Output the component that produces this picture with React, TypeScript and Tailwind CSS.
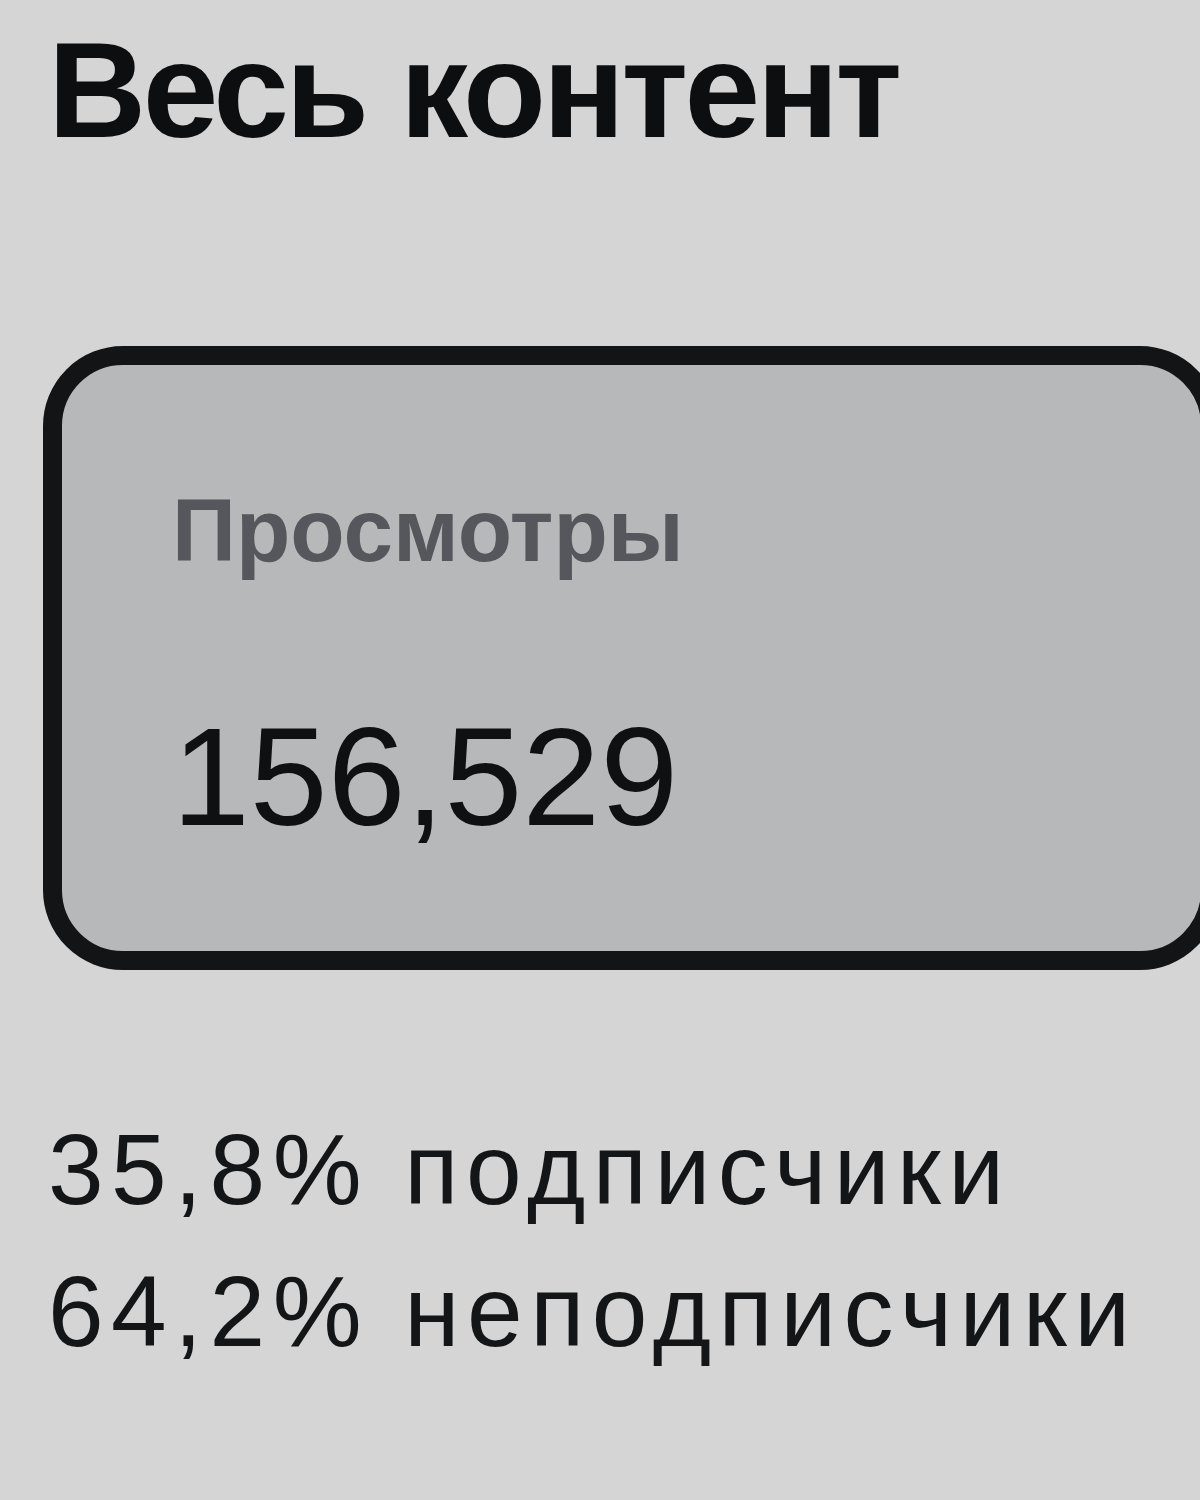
import React from "react";

const font = { fontFamily: '"Liberation Sans", Arial, sans-serif' };

export default function App() {
  return (
    <div
      className="w-[1200px] h-[1500px] overflow-hidden bg-[#d5d5d5] pl-[43px] flex flex-col"
      style={font}
    >
      <h1 className="mt-[22px] ml-[5px] text-[136px] leading-none font-bold text-[#0d0e10] tracking-[-0.025em] whitespace-nowrap">
        Весь контент
      </h1>

      <div className="mt-[188px] w-[1177px] h-[624px] shrink-0 rounded-[80px] border-[19px] border-[#121416] bg-[#b7b8ba] pl-[110px] pt-[121px] flex flex-col">
        <div className="text-[89px] leading-none font-bold text-[#55575c] whitespace-nowrap">
          Просмотры
        </div>
        <div className="mt-[132px] text-[140px] leading-none text-[#0f1012] whitespace-nowrap">
          156,529
        </div>
      </div>

      <div className="mt-[128px] ml-[5px] text-[100px] leading-[142px] text-[#141516] tracking-[0.075em] whitespace-nowrap">
        <div>35,8% подписчики</div>
        <div>64,2% неподписчики</div>
      </div>
    </div>
  );
}
